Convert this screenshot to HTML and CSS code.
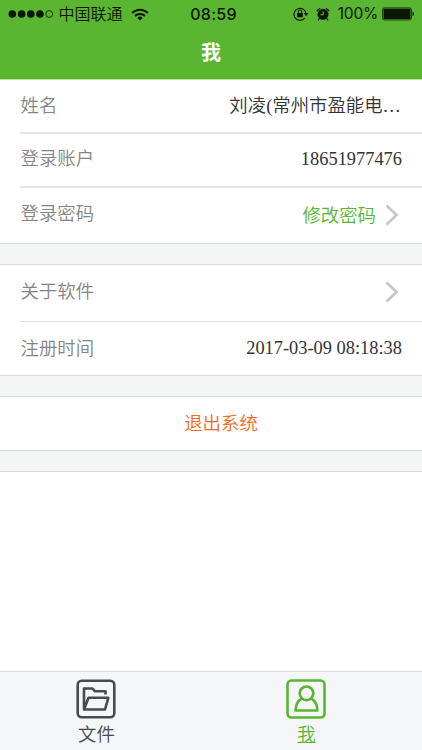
FILE: index.html
```
<!DOCTYPE html>
<html lang="zh-CN">
<head>
<meta charset="utf-8">
<title>我</title>
<link rel="stylesheet" href="styles.css">
</head>
<body>
<header class="header">
  <div class="status">
    <div class="status-left">
      <svg class="signal" width="46" height="10" viewBox="0 0 46 10"><circle cx="4.3" cy="5" r="3.8"/><circle cx="13.6" cy="5" r="3.8"/><circle cx="22.8" cy="5" r="3.8"/><circle cx="32" cy="5" r="3.8"/><circle cx="41.2" cy="5" r="3.4" fill="none" stroke="#0a1704" stroke-width=".8"/></svg>
      <span class="carrier">中国联通</span>
      <svg class="wifi" width="18" height="13" viewBox="0 0 18 13"><g fill="none" stroke="#0a1704" stroke-width="2"><path d="M1.2 5a11 11 0 0 1 15.6 0"/><path d="M4 8a7 7 0 0 1 10 0"/></g><path d="M9 12.6 6.3 9.9a3.900 3.900 0 0 1 5.400 0z"/></svg>
    </div>
    <span class="clock">08:59</span>
    <div class="status-right">
      <svg class="lock" width="16" height="14" viewBox="0 0 16 14"><path d="M11.7 11.1A6 6 0 1 1 13 7" fill="none" stroke="#0a1704" stroke-width="1.2"/><path d="M10.6 6h5L13.100 9z"/><rect x="4.200" y="6" width="5.600" height="4.200" rx=".5"/><path d="M5.300 6V4.800a1.700 1.700 0 0 1 3.400 0V6" fill="none" stroke="#0a1704"/></svg>
      <svg class="alarm" width="14" height="14" viewBox="0 0 14 14"><circle cx="7" cy="7.300" r="5.500"/><path d="M.8 4 4 1.200M13.200 4 10 1.200M3.300 11.500 2 13.300M10.700 11.500l1.300 1.800" stroke="#0a1704" stroke-width="1.200"/><path d="M7.200 4.300v3.500H4.400" fill="none" stroke="#5ab531" stroke-width="1.100"/></svg>
      <span class="percent">100%</span>
      <svg class="battery" width="33" height="14" viewBox="0 0 33 14"><rect x=".6" y=".9" width="28.800" height="12" rx="1.800" fill="none" stroke="#0a1704" stroke-width=".8"/><rect x="1.500" y="1.800" width="27" height="10.200" rx=".8"/><path d="M30.500 4.800c2 .4 2 3.800 0 4.200z"/></svg>
    </div>
  </div>
  <h1 class="title">我</h1>
</header>
<main class="content">
  <section class="group account">
    <div class="row"><span class="label">姓名</span><span class="value name">刘凌(常州市盈能电…</span></div>
    <div class="row"><span class="label">登录账户</span><span class="value">18651977476</span></div>
    <div class="row tall"><span class="label">登录密码</span><span class="change">修改密码</span><svg class="chevron" width="14" height="22" viewBox="0 0 14 22"><path d="m1.500 1.500 10 9.500-10 9.500"/></svg></div>
  </section>
  <section class="group details">
    <div class="row about"><span class="label">关于软件</span><svg class="chevron" width="14" height="22" viewBox="0 0 14 22"><path d="m1.500 1.500 10 9.500-10 9.500"/></svg></div>
    <div class="row registered"><span class="label">注册时间</span><span class="value">2017-03-09 08:18:38</span></div>
  </section>
  <section class="group logout">退出系统</section>
</main>
<nav class="tabs">
  <div class="tab">
    <svg width="40" height="40" viewBox="0 0 40 40"><rect x="1.700" y="1.700" width="36.600" height="36.600" rx="4"/><path d="M29.500 15.500v-3.200H19L16.500 9.500H8v21l4.500-11.700h19.800L29 30.500H8"/></svg>
    <span>文件</span>
  </div>
  <div class="tab active">
    <svg width="40" height="40" viewBox="0 0 40 40"><rect x="1.500" y="1.500" width="37" height="37" rx="4"/><circle cx="20.500" cy="14.300" r="6.800"/><path d="M15.800 19.300C11.300 22 9.800 26 9.600 31.500h21.800c-.2-5.500-1.700-9.500-6.200-12.200"/></svg>
    <span>我</span>
  </div>
</nav>
</body>
</html>
```
FILE: styles.css
```
* { box-sizing: border-box; }
body {
  margin: 0;
  height: 750px;
  display: flex;
  flex-direction: column;
  overflow: hidden;
  background: #fff;
  font: 350 18.4px/26px "Liberation Serif", "Noto Sans CJK SC", sans-serif;
  color: #333;
}
svg { display: block; flex: none; }
.header {
  height: 80px;
  background: #5ab531;
  border-bottom: 1px solid #bde4a9;
}
.status {
  height: 28px;
  padding: 0 8px;
  display: grid;
  grid-template-columns: 1fr auto 1fr;
  align-items: center;
  font: 17px/28px Inter, "Noto Sans CJK SC", sans-serif;
  color: #0a1704;
  fill: #0a1704;
}
.status-left, .status-right { display: flex; align-items: center; }
.status-right { justify-content: flex-end; }
.carrier { margin-left: 4.5px; font-size: 16px; font-weight: 350; }
.wifi { margin-left: 8px; }
.clock { font-weight: 500; font-size: 16px; letter-spacing: .3px; padding-left: 5px; }
.alarm { margin-left: 7px; }
.percent { margin-left: 8px; font-size: 15.500px; letter-spacing: -.2px; }
.battery { margin-left: 4px; margin-right: -1px; }
.title {
  margin: 11px 0 0;
  font: bold 20px/26px "Noto Sans CJK SC", sans-serif;
  color: #fff;
  text-align: center;
}
.content { flex: 1; }
.group {
  border-bottom: 1px solid #dadada;
  box-shadow: 0 20px #f4f6f6, 0 21px #dadada;
  margin-bottom: 21px;
  padding-left: 20px;
}
.row {
  height: 54px;
  padding: 0 20px 2px 0;
  display: flex;
  align-items: center;
}
.row + .row { border-top: 1px solid #dedede; }
.account .row + .row { border-top: 2px solid #e6e6e6; }
.account .row:first-child { height: 52px; padding-bottom: 0; }
.row.tall { height: 57px; padding-bottom: 3px; }
.row.about { height: 56px; padding-bottom: 3px; }
.row.registered { padding-bottom: 1px; }
.registered .label { padding-top: 2px; }
.label { flex: 1; color: #858585; padding-left: .5px; }
.value { color: #333; }
.name { margin-right: 1px; }
.change { color: #5ab531; padding-top: 4px; }
.chevron {
  margin: 1px 3px 0 9px;
  fill: none;
  stroke: #c7c7cc;
  stroke-width: 2.800;
}
.logout {
  height: 54px;
  padding: 0 0 0 20px;
  line-height: 55px;
  text-align: center;
  color: #f26a22;
}
.tabs {
  height: 79px;
  flex: none;
  display: grid;
  grid-template-columns: 1fr 1fr;
  padding: 0 10px 0 0;
  border-top: 1px solid #dadada;
  background: #f4f6f8;
}
.tab {
  padding: 7px 0 0;
  display: flex;
  flex-direction: column;
  align-items: center;
  color: #4a4a4a;
}
.tab:first-child { padding-right: 13px; }
.tab svg { margin-left: -2px; fill: none; stroke: currentColor; stroke-width: 2.600; stroke-linejoin: round; }
.tab span { line-height: 30px; padding-top: 1px; }
.tab.active { color: #5ab531; padding-right: 5px; }
.active span { text-decoration: underline; text-decoration-thickness: 1px; }
```
